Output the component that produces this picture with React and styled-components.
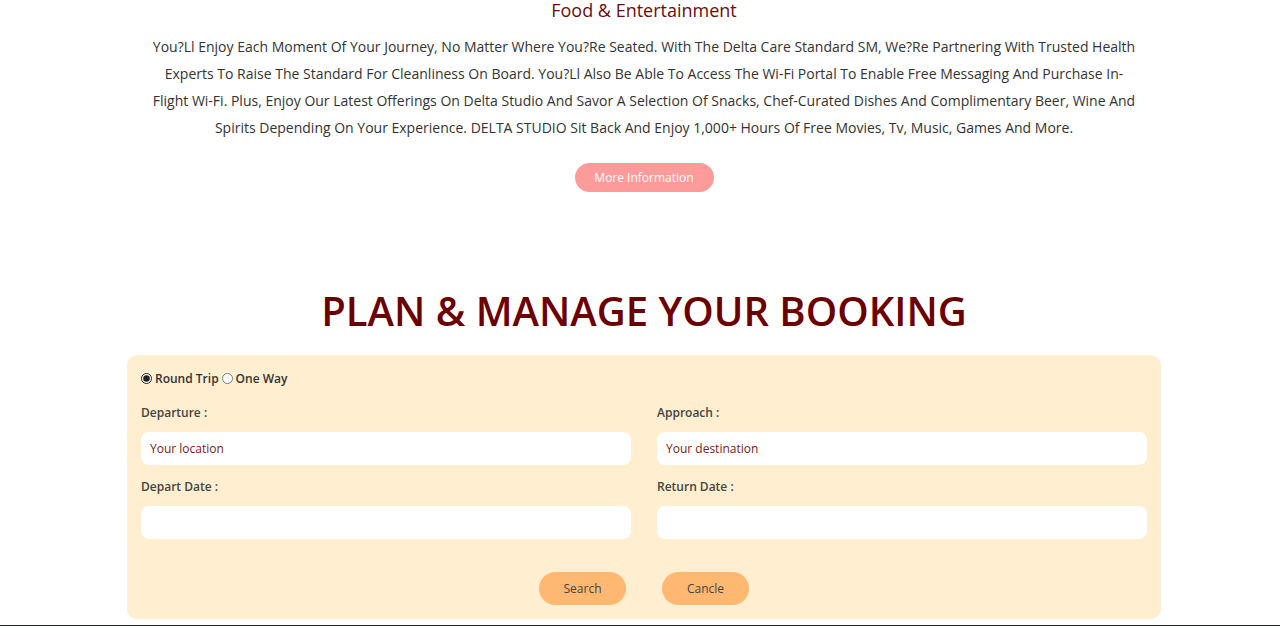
import React, { useState } from 'react';
import styled, { createGlobalStyle } from 'styled-components';

const GlobalStyle = createGlobalStyle`
  * {
    box-sizing: border-box;
  }
  body {
    margin: 0;
    background: #ffffff;
    font-family: 'Open Sans', 'Liberation Sans', sans-serif;
  }
`;

const Page = styled.div`
  display: flex;
  flex-direction: column;
  align-items: center;
  min-height: 626px;
  padding-left: 8px;
`;

const InfoSection = styled.section`
  display: flex;
  flex-direction: column;
  align-items: center;
  width: 100%;
`;

const SectionTitle = styled.h3`
  margin: 0;
  padding-top: 1px;
  font-size: 18px;
  line-height: 18px;
  font-weight: 500;
  color: #6b0d0d;
`;

const Description = styled.p`
  margin: 14px 0 0;
  width: 1040px;
  text-align: center;
  font-size: 14px;
  line-height: 27px;
  color: #333333;
`;

const PinkButton = styled.button`
  margin-top: 22px;
  width: 139px;
  height: 29px;
  border: none;
  border-radius: 15px;
  background: #fd9b9b;
  color: #ffffff;
  font-family: inherit;
  font-size: 12px;
  cursor: pointer;
`;

const BookingTitle = styled.h1`
  margin: 93px 0 0;
  font-size: 40px;
  line-height: 52px;
  font-weight: 600;
  color: #6b0000;
`;

const Card = styled.form`
  margin-top: 18px;
  width: 1034px;
  padding: 14px 14px 14px;
  background: #ffeed0;
  border-radius: 10px;
`;

const TripRow = styled.div`
  display: flex;
  align-items: center;
  height: 18px;
  font-size: 12px;
  font-weight: 600;
  color: #333333;
`;

const Radio = styled.input`
  margin: 0 3px 0 0;
  width: 11px;
  height: 11px;
  accent-color: #222222;
`;

const RadioLabel = styled.label`
  display: flex;
  align-items: center;
  margin-right: 3px;
`;

const Fields = styled.div`
  display: grid;
  grid-template-columns: 1fr 1fr;
  column-gap: 26px;
  margin-top: 17px;
`;

const Field = styled.div`
  display: flex;
  flex-direction: column;
  margin-bottom: ${(p) => (p.$last ? '0' : '13px')};
`;

const FieldLabel = styled.label`
  height: 18px;
  line-height: 18px;
  font-size: 12px;
  font-weight: 600;
  color: #444444;
`;

const TextInput = styled.input`
  margin-top: 10px;
  height: 33px;
  border: none;
  border-radius: 8px;
  background: #ffffff;
  padding: 0 9px;
  font-family: inherit;
  font-size: 12px;
  color: #6b0d0d;
  outline: none;
  &::placeholder {
    color: #7a1a1a;
  }
`;

const Actions = styled.div`
  display: flex;
  justify-content: center;
  gap: 36px;
  margin-top: 33px;
`;

const OrangeButton = styled.button`
  width: 87px;
  height: 33px;
  border: none;
  border-radius: 17px;
  background: #ffb871;
  color: #444444;
  font-family: inherit;
  font-size: 12px;
  cursor: pointer;
`;

const Footer = styled.footer`
  margin: 6px 0 0 -8px;
  width: calc(100% + 8px);
  height: 40px;
  background: #1e2833;
`;

const App = () => {
  const [trip, setTrip] = useState('round');

  return (
    <>
      <GlobalStyle />
      <Page>
        <InfoSection>
          <SectionTitle>Food &amp; Entertainment</SectionTitle>
          <Description>
            You?Ll Enjoy Each Moment Of Your Journey, No Matter Where You?Re Seated. With The Delta Care Standard SM, We?Re Partnering With Trusted Health
            <br />
            Experts To Raise The Standard For Cleanliness On Board. You?Ll Also Be Able To Access The Wi-Fi Portal To Enable Free Messaging And Purchase In-
            <br />
            Flight Wi-Fi. Plus, Enjoy Our Latest Offerings On Delta Studio And Savor A Selection Of Snacks, Chef-Curated Dishes And Complimentary Beer, Wine And
            <br />
            Spirits Depending On Your Experience. DELTA STUDIO Sit Back And Enjoy 1,000+ Hours Of Free Movies, Tv, Music, Games And More.
          </Description>
          <PinkButton type="button">More Information</PinkButton>
        </InfoSection>

        <BookingTitle>PLAN &amp; MANAGE YOUR BOOKING</BookingTitle>

        <Card onSubmit={(e) => e.preventDefault()}>
          <TripRow>
            <RadioLabel>
              <Radio
                type="radio"
                name="trip"
                checked={trip === 'round'}
                onChange={() => setTrip('round')}
              />
              Round Trip
            </RadioLabel>
            <RadioLabel>
              <Radio
                type="radio"
                name="trip"
                checked={trip === 'oneway'}
                onChange={() => setTrip('oneway')}
              />
              One Way
            </RadioLabel>
          </TripRow>

          <Fields>
            <Field>
              <FieldLabel>Departure :</FieldLabel>
              <TextInput placeholder="Your location" />
            </Field>
            <Field>
              <FieldLabel>Approach :</FieldLabel>
              <TextInput placeholder="Your destination" />
            </Field>
            <Field $last>
              <FieldLabel>Depart Date :</FieldLabel>
              <TextInput />
            </Field>
            <Field $last>
              <FieldLabel>Return Date :</FieldLabel>
              <TextInput />
            </Field>
          </Fields>

          <Actions>
            <OrangeButton type="submit">Search</OrangeButton>
            <OrangeButton type="button">Cancle</OrangeButton>
          </Actions>
        </Card>

        <Footer />
      </Page>
    </>
  );
};

export default App;
